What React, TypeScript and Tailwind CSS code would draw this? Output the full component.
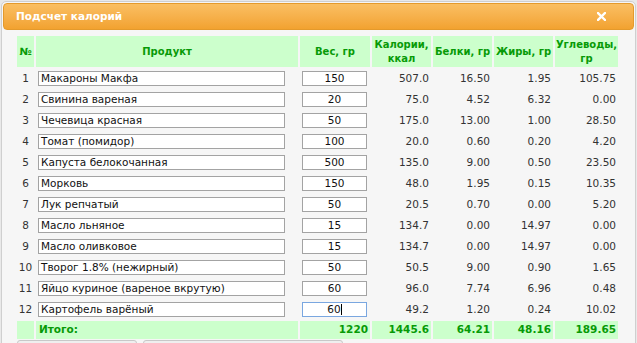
import React from "react";

const rows: [string, string, string, string, string, string][] = [
  ["Макароны Макфа", "150", "507.0", "16.50", "1.95", "105.75"],
  ["Свинина вареная", "20", "75.0", "4.52", "6.32", "0.00"],
  ["Чечевица красная", "50", "175.0", "13.00", "1.00", "28.50"],
  ["Томат (помидор)", "100", "20.0", "0.60", "0.20", "4.20"],
  ["Капуста белокочанная", "500", "135.0", "9.00", "0.50", "23.50"],
  ["Морковь", "150", "48.0", "1.95", "0.15", "10.35"],
  ["Лук репчатый", "50", "20.5", "0.70", "0.00", "5.20"],
  ["Масло льняное", "15", "134.7", "0.00", "14.97", "0.00"],
  ["Масло оливковое", "15", "134.7", "0.00", "14.97", "0.00"],
  ["Творог 1.8% (нежирный)", "50", "50.5", "9.00", "0.90", "1.65"],
  ["Яйцо куриное (вареное вкрутую)", "60", "96.0", "7.74", "6.96", "0.48"],
  ["Картофель варёный", "60", "49.2", "1.20", "0.24", "10.02"],
];

const font = { fontFamily: '"DejaVu Sans", Verdana, sans-serif' };

export default function App() {
  return (
    <div
      className="w-[637px] h-[343px] bg-[#e9e9e9] overflow-hidden pt-[1px] px-[1px]"
      style={font}
    >
      <div className="w-[635px] h-[400px] bg-[#f6f6f6] border border-[#cfcfcf] rounded-t-[5px] px-[1px] pt-[1px]">
        <div className="h-[27px] rounded-[4px] border border-[#e49a2c] bg-gradient-to-b from-[#fabf62] to-[#f2a22f] flex items-center justify-between pl-[12px] pr-[27px]">
          <span className="text-white font-bold text-[10.5px]">Подсчет калорий</span>
          <svg width="9" height="9" viewBox="0 0 9 9">
            <path d="M1 1 L8 8 M8 1 L1 8" stroke="white" strokeWidth="2.4" strokeLinecap="square" />
          </svg>
        </div>
        <div className="pl-[14px] pt-[6px]">
          <div className="grid grid-cols-[17px_262px_70px_59px_59px_59px_63px] gap-[2px] text-[10.5px] text-[#333]">
            {/* header */}
            {["№", "Продукт", "Вес, гр"].map((h) => (
              <div
                key={h}
                className="h-[31px] bg-[#ccffcc] text-[#079a07] font-bold flex items-center justify-center text-[10px]"
              >
                {h}
              </div>
            ))}
            <div className="h-[31px] bg-[#ccffcc] text-[#079a07] font-bold flex items-center justify-center text-center leading-[14px] text-[10px]">
              Калории,
              <br />
              ккал
            </div>
            <div className="h-[31px] bg-[#ccffcc] text-[#079a07] font-bold flex items-center justify-center text-[10px]">
              Белки, гр
            </div>
            <div className="h-[31px] bg-[#ccffcc] text-[#079a07] font-bold flex items-center justify-center text-[10px]">
              Жиры, гр
            </div>
            <div className="h-[31px] bg-[#ccffcc] text-[#079a07] font-bold flex items-center justify-center text-center leading-[14px] text-[10px]">
              Углеводы,
              <br />
              гр
            </div>
            {rows.map((r, i) => (
              <React.Fragment key={i}>
                <div className="h-[19px] flex items-center justify-center">{i + 1}</div>
                <div className="h-[19px] flex items-center pl-[2px]">
                  <div className="w-[247px] h-[15px] bg-white border border-[#a3a3a3] flex items-center pl-[2px] text-[#111] whitespace-nowrap overflow-hidden">
                    {r[0]}
                  </div>
                </div>
                <div className="h-[19px] flex items-center pl-[2px]">
                  <div
                    className={
                      i === rows.length - 1
                        ? "w-[65px] h-[15px] bg-white border border-[#7aa7e0] flex items-center justify-center text-[#111]"
                        : "w-[65px] h-[15px] bg-white border border-[#a3a3a3] flex items-center justify-center text-[#111]"
                    }
                  >
                    {r[1]}
                    {i === rows.length - 1 && <span className="w-px h-[11px] bg-black" />}
                  </div>
                </div>
                {r.slice(2).map((v, j) => (
                  <div key={j} className="h-[19px] flex items-center justify-end pr-[2px]">
                    {v}
                  </div>
                ))}
              </React.Fragment>
            ))}
            {/* total */}
            <div className="h-[18px] bg-[#ccffcc]" />
            <div className="h-[18px] bg-[#ccffcc] text-[#079a07] font-bold flex items-center pl-[3px]">Итого:</div>
            {["1220", "1445.6", "64.21", "48.16", "189.65"].map((v) => (
              <div
                key={v}
                className="h-[18px] bg-[#ccffcc] text-[#079a07] font-bold flex items-center justify-end pr-[2px]"
              >
                {v}
              </div>
            ))}
          </div>
          <div className="flex gap-[6px] mt-[1px]">
            <div className="w-[120px] h-[10px] border border-[#c8c8c8] rounded-t-[3px] bg-[#efefef]" />
            <div className="w-[200px] h-[10px] border border-[#c8c8c8] rounded-t-[3px] bg-[#efefef]" />
          </div>
        </div>
      </div>
    </div>
  );
}
